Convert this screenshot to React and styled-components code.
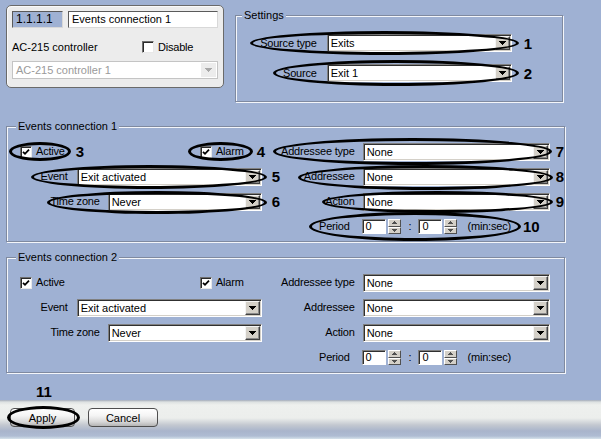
import React from "react";
import styled, { createGlobalStyle, css } from "styled-components";

const GlobalStyle = createGlobalStyle`
  html, body { margin: 0; padding: 0; }
  body {
    background: #9fb1d3;
    font-family: "Liberation Sans", Arial, sans-serif;
    font-size: 11px;
    color: #000;
  }
`;

const Page = styled.div`
  width: 601px;
  height: 439px;
  display: flex;
  flex-direction: column;
  background: #9fb1d3;
  overflow: hidden;
`;

const TopRow = styled.div`
  display: flex;
  align-items: flex-start;
  padding: 5px 0 0 6px;
`;

const ObjectPanel = styled.div`
  width: 218px;
  height: 83px;
  box-sizing: border-box;
  border: 1px solid #6a6a6a;
  border-radius: 5px;
  background: #ececec;
  box-shadow: inset 1px 1px 0 #fafafa;
  padding: 5px 5px 0 5px;
  display: flex;
  flex-direction: column;
`;

const PanelRow = styled.div`
  display: flex;
  align-items: center;
  gap: ${p => p.$gap || 0}px;
  margin-top: ${p => p.$mt || 0}px;
  height: ${p => p.$h}px;
`;

const TextBox = styled.div`
  box-sizing: border-box;
  width: ${p => p.$w}px;
  height: 17px;
  padding-left: 3px;
  line-height: 15px;
  font-size: ${p => p.$fs || 11}px;
  white-space: nowrap;
  background: ${p => p.$bg || "#fff"};
  border: 1px solid;
  border-color: #5a5a5a #d8d8d8 #d8d8d8 #5a5a5a;
`;

const PanelLabel = styled.span`
  width: 130px;
  white-space: nowrap;
`;

const GroupBox = styled.fieldset`
  box-sizing: border-box;
  width: ${p => p.$w}px;
  min-width: 0;
  margin: ${p => p.$mt || 0}px 0 0 ${p => p.$ml || 0}px;
  padding: ${p => p.$pt || 0}px 0 ${p => p.$pb || 0}px 0;
  border: 1px solid #7f8aa0;
  box-shadow: inset 1px 1px 0 #f4f6fa, 1px 1px 0 #f4f6fa;
`;

const Legend = styled.legend`
  margin-left: ${p => p.$ml || 9}px;
  padding: 0 2px;
  line-height: 13px;
  font-size: 11px;
  background: #9fb1d3;
`;

const SettingsBody = styled.div`
  display: flex;
  flex-direction: column;
  gap: 6px;
  padding-right: 30px;
`;

const GroupBody = styled.div`
  display: grid;
  grid-template-columns: 276px minmax(0, 1fr);
`;

const Column = styled.div`
  display: flex;
  flex-direction: column;
  min-width: 0;
`;

const Row = styled.div`
  box-sizing: border-box;
  height: ${p => p.$h || 25}px;
  display: flex;
  align-items: center;
  justify-content: ${p => (p.$end ? "flex-end" : "flex-start")};
  padding: 0 ${p => p.$pr || 0}px 0 ${p => p.$pl || 0}px;
`;

const Spacer = styled.div`
  flex: 1;
`;

const Marked = styled.div`
  position: relative;
  display: inline-flex;
  flex-shrink: 0;
  align-items: center;
  ${p =>
    p.$ins &&
    css`
      &::after {
        content: "";
        position: absolute;
        top: ${-p.$ins[0]}px;
        right: ${-p.$ins[1]}px;
        bottom: ${-p.$ins[2]}px;
        left: ${-p.$ins[3]}px;
        border: 3px solid #000;
        border-radius: 50%;
        pointer-events: none;
      }
    `}
`;

const Label = styled.span`
  white-space: nowrap;
  line-height: 13px;
  letter-spacing: -0.2px;
  margin-left: ${p => p.$ml || 0}px;
`;

const Num = styled.span`
  flex-shrink: 0;
  font-weight: bold;
  font-size: 15px;
  line-height: 15px;
  margin-left: ${p => p.$ml || 0}px;
  visibility: ${p => (p.$hide ? "hidden" : "visible")};
`;

const ComboBox = styled.div`
  box-sizing: border-box;
  flex-shrink: 0;
  width: ${p => p.$w}px;
  height: 18px;
  margin-left: ${p => p.$ml || 0}px;
  display: flex;
  padding: 1px;
  background: #fff;
  border: 1px solid;
  ${p =>
    p.$disabled
      ? css`
          border-color: #c4c4c4;
          color: #9a9a9a;
        `
      : css`
          border-color: #808080 #fff #fff #808080;
          box-shadow: inset 1px 1px 0 #303030, inset -1px -1px 0 #d4d0c8;
        `}
`;

const ComboText = styled.div`
  flex: 1;
  padding-left: 2px;
  line-height: 14px;
  white-space: nowrap;
  overflow: hidden;
`;

const ArrowButton = styled.div`
  box-sizing: border-box;
  width: 15px;
  display: flex;
  align-items: center;
  justify-content: center;
  ${p =>
    p.$disabled
      ? css`
          background: #ececec;
        `
      : css`
          background: #d4d0c8;
          border: 1px solid;
          border-color: #f4f4f4 #404040 #404040 #f4f4f4;
          box-shadow: inset -1px -1px 0 #8a8a8a;
        `}
`;

const EditBox = styled.div`
  box-sizing: border-box;
  width: 24px;
  height: 15px;
  margin-left: ${p => p.$ml || 0}px;
  padding-left: 3px;
  line-height: 13px;
  background: #fff;
  border: 1px solid;
  border-color: #808080 #fff #fff #808080;
  box-shadow: inset 1px 1px 0 #303030;
`;

const SpinWrap = styled.div`
  display: flex;
  flex-direction: column;
  width: 13px;
  height: 15px;
  margin-left: ${p => p.$ml || 0}px;
`;

const SpinHalf = styled.div`
  flex: 1;
  box-sizing: border-box;
  display: flex;
  align-items: center;
  justify-content: center;
  background: #d4d0c8;
  border: 1px solid;
  border-color: #fff #505050 #505050 #fff;
`;

const CheckBox = styled.div`
  box-sizing: border-box;
  width: 12px;
  height: 12px;
  display: flex;
  align-items: center;
  justify-content: center;
  background: #fff;
  border: 1px solid;
  border-color: #6e6e6e #e8e8e8 #e8e8e8 #6e6e6e;
  box-shadow: inset 1px 1px 0 #2a2a2a;
`;

const CheckWrap = styled(Marked)`
  gap: 4px;
`;

const BottomNote = styled.div`
  height: 27px;
  display: flex;
  align-items: flex-end;
  padding-left: 36px;
  box-sizing: border-box;
  padding-bottom: 1px;
`;

const BottomBar = styled.div`
  flex: 1;
  display: flex;
  align-items: flex-start;
  gap: 13px;
  padding: 8px 0 0 10px;
  background: linear-gradient(
    to bottom,
    #a3abba 0px,
    #dde1e1 2px,
    #eef0ee 5px,
    #eceeec 18px,
    #c3c8d0 25px,
    #a9b4cb 31px,
    #afbcd3 36px,
    #d6e2ea 39px
  );
`;

const Button = styled.div`
  box-sizing: border-box;
  width: ${p => p.$w}px;
  height: 19px;
  display: flex;
  align-items: center;
  justify-content: center;
  border: 1px solid #4e4e4e;
  border-radius: 4px;
  background: linear-gradient(to bottom, #ffffff 0%, #f4f4f4 40%, #d8d8d8 75%, #b4b4b4 100%);
`;

const Triangle = ({ color = "#000" }) => (
  <svg width="7" height="4" viewBox="0 0 7 4" shapeRendering="crispEdges">
    <path d="M0 0h7v1h-1v1h-1v1h-1v1h-1v-1h-1v-1h-1v-1h-1z" fill={color} />
  </svg>
);

const SmallArrow = ({ up }) => (
  <svg width="5" height="3" viewBox="0 0 5 3" shapeRendering="crispEdges">
    <path
      d={up ? "M2 0h1v1h1v1h1v1h-5v-1h1v-1h1z" : "M0 0h5v1h-1v1h-1v1h-1v-1h-1v-1h-1z"}
      fill="#505050"
    />
  </svg>
);

const Tick = () => (
  <svg width="8" height="8" viewBox="0 0 8 8">
    <polyline points="1,3.8 3,5.8 7,1.6" fill="none" stroke="#000" strokeWidth="1.8" />
  </svg>
);

const Combo = ({ w, value, ml, disabled }) => (
  <ComboBox $w={w} $ml={ml} $disabled={disabled}>
    <ComboText>{value}</ComboText>
    <ArrowButton $disabled={disabled}>
      <Triangle color={disabled ? "#a8a8a8" : "#000"} />
    </ArrowButton>
  </ComboBox>
);

const Field = ({ label, value, w, mark, gap = 9 }) => (
  <Marked $ins={mark}>
    <Label>{label}</Label>
    <Combo w={w} value={value} ml={gap} />
  </Marked>
);

const Check = ({ label, checked, mark }) => (
  <CheckWrap $ins={mark}>
    <CheckBox>{checked && <Tick />}</CheckBox>
    <Label>{label}</Label>
  </CheckWrap>
);

const Spin = ({ ml }) => (
  <SpinWrap $ml={ml}>
    <SpinHalf>
      <SmallArrow up />
    </SpinHalf>
    <SpinHalf>
      <SmallArrow />
    </SpinHalf>
  </SpinWrap>
);

const EventsGroup = ({ n, marked, mt }) => {
  const m = ins => (marked ? ins : null);
  return (
    <GroupBox $w={559} $ml={6} $mt={mt} $pt={6} $pb={2}>
      <Legend>Events connection {n}</Legend>
      <GroupBody>
        <Column>
          <Row $pl={13} $pr={18}>
            <Check checked label="Active" mark={m([3, 6, 3, 11])} />
            <Num $ml={11} $hide={!marked}>3</Num>
            <Spacer />
            <Check checked label="Alarm" mark={m([3, 9, 3, 12])} />
            <Num $ml={13} $hide={!marked}>4</Num>
          </Row>
          <Row $end $pr={3}>
            <Field label="Event" value="Exit activated" w={185} mark={m([3, 5, 3, 10])} />
            <Num $ml={10} $hide={!marked}>5</Num>
          </Row>
          <Row $end $pr={3}>
            <Field label="Time zone" value="Never" w={154} gap={8} mark={m([2, 5, 3, 4])} />
            <Num $ml={10} $hide={!marked}>6</Num>
          </Row>
        </Column>
        <Column>
          <Row $end>
            <Field label="Addressee type" value="None" w={187} gap={8} mark={m([5, 2, 4, 8])} />
            <Num $ml={6} $hide={!marked}>7</Num>
          </Row>
          <Row $end>
            <Field label="Addressee" value="None" w={187} gap={8} mark={m([3, 3, 4, 6])} />
            <Num $ml={6} $hide={!marked}>8</Num>
          </Row>
          <Row $end>
            <Field label="Action" value="None" w={187} gap={8} mark={m([2, 3, 2, 3])} />
            <Num $ml={6} $hide={!marked}>9</Num>
          </Row>
          <Row $pl={36}>
            <Marked $ins={m([7, 10, 7, 10])}>
              <Label>Period</Label>
              <EditBox $ml={12}>0</EditBox>
              <Spin ml={2} />
              <Label $ml={8}>:</Label>
              <EditBox $ml={7}>0</EditBox>
              <Spin ml={2} />
              <Label $ml={10}>(min:sec)</Label>
            </Marked>
            <Num $ml={12} $hide={!marked}>10</Num>
          </Row>
        </Column>
      </GroupBody>
    </GroupBox>
  );
};

export default function App() {
  return (
    <Page>
      <GlobalStyle />
      <TopRow>
        <ObjectPanel>
          <PanelRow $gap={5} $h={17}>
            <TextBox $w={51} $bg="#9fb1d3" $fs={12}>1.1.1.1</TextBox>
            <TextBox $w={150}>Events connection 1</TextBox>
          </PanelRow>
          <PanelRow $mt={12} $h={14}>
            <PanelLabel>AC-215 controller</PanelLabel>
            <Check label="Disable" />
          </PanelRow>
          <PanelRow $mt={7} $h={18}>
            <Combo w={206} value="AC-215 controller 1" disabled />
          </PanelRow>
        </ObjectPanel>
        <GroupBox $w={328} $ml={11} $mt={4} $pt={9} $pb={16}>
          <Legend $ml={6}>Settings</Legend>
          <SettingsBody>
            <Row $end $h={24}>
              <Field label="Source type" value="Exits" w={185} gap={10} mark={[3, 7, 3, 10]} />
              <Num $ml={12}>1</Num>
            </Row>
            <Row $end $h={24}>
              <Field label="Source" value="Exit 1" w={185} gap={10} mark={[4, 7, 4, 10]} />
              <Num $ml={12}>2</Num>
            </Row>
          </SettingsBody>
        </GroupBox>
      </TopRow>
      <EventsGroup n={1} marked mt={18} />
      <EventsGroup n={2} mt={9} />
      <BottomNote>
        <Num>11</Num>
      </BottomNote>
      <BottomBar>
        <Marked $ins={[2, 5, 2, 3]}>
          <Button $w={65}>Apply</Button>
        </Marked>
        <Button $w={70}>Cancel</Button>
      </BottomBar>
    </Page>
  );
}
